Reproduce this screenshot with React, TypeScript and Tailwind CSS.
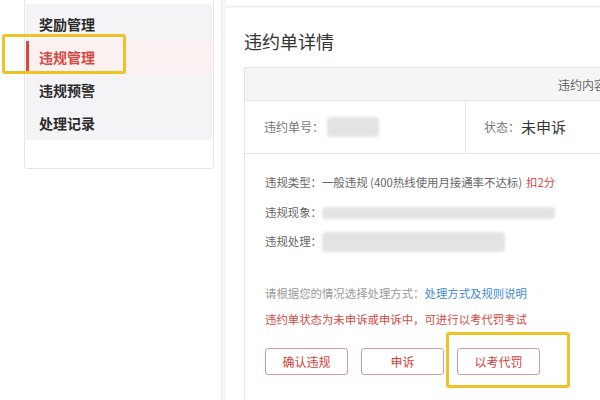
import { ReactNode } from "react";

const menuItems = ["奖励管理", "违规管理", "违规预警", "处理记录"];

function Blur({ className }: { className: string }) {
    // masked-out values in the screenshot
    return <div className={`rounded-[4px] bg-[#e3e3e3] blur-[1.5px] ${className}`} />;
}

function OutlineButton({ children }: { children: ReactNode }) {
    return (
        <button className="w-[83px] h-[27px] rounded-[3px] border border-[#d39a9a] bg-white text-[12px] text-[#d2403c]">
            {children}
        </button>
    );
}

export default function App() {
    return (
        <div
            className="relative w-[600px] h-[400px] overflow-hidden flex bg-white"
            style={{ fontFamily: '"Noto Sans CJK SC", "Noto Sans", sans-serif' }}
        >
            {/* Sidebar */}
            <div className="w-[221px] shrink-0 pl-[24px] pr-[7px]">
                <div className="h-[169px] border-x border-b border-[#e6e6e6] rounded-b-[4px] bg-white pt-[4px] px-[1px]">
                    <div className="bg-[#f4f4f6] h-[136px] flex flex-col pt-[4px]">
                        {menuItems.map((item, i) => (
                            <div
                                key={item}
                                className={
                                    i === 1
                                        ? "h-[34px] flex items-center pl-[10px] border-l-[3px] border-[#d9473f] bg-[#fbf1f1] text-[#d9473f] text-[14px] font-bold"
                                        : "h-[34px] flex items-center pl-[13px] text-[#2b2b2b] text-[14px] font-bold"
                                }
                            >
                                {item}
                            </div>
                        ))}
                    </div>
                </div>
            </div>

            {/* Main area */}
            <div className="flex-1 flex flex-col bg-[#f6f6f6] border-l border-[#ececec] pl-[4px]">
                <div className="h-[7px] bg-white border-b border-[#ececec] shrink-0" />
                <div className="flex-1 bg-white mt-[1px] pl-[18px] pt-[21px]">
                    <h1 className="text-[18px] leading-[24px] text-[#333] font-normal">违约单详情</h1>

                    <div className="mt-[14px] w-[420px] border-l border-t border-[#e6e6e6]">
                        <div className="h-[33px] pt-[2px] bg-[#f5f5f5] border-b border-[#e6e6e6] flex items-center pl-[313px] text-[12px] text-[#666]">
                            违约内容
                        </div>
                        <div className="h-[53px] border-b border-[#e6e6e6] flex">
                            <div className="w-[221px] border-r border-[#e6e6e6] flex items-center pl-[19px] text-[12px] text-[#777]">
                                违约单号：
                                <Blur className="ml-[3px] w-[52px] h-[20px]" />
                            </div>
                            <div className="flex items-center pl-[18px] text-[12px] text-[#777]">
                                状态：<span className="ml-[1px] text-[15px] text-[#333]">未申诉</span>
                            </div>
                        </div>

                        <div className="pl-[20px] pt-[14px] pb-[40px] text-[11.4px] text-[#666]">
                            <div className="h-[30px] flex items-center">
                                违规类型：一般违规 (400热线使用月接通率不达标)
                                <span className="ml-[4px] text-[#d9473f]">扣2分</span>
                            </div>
                            <div className="h-[29px] flex items-center">
                                违规现象：
                                <Blur className="w-[233px] h-[12px]" />
                            </div>
                            <div className="h-[30px] flex items-center">
                                违规处理：
                                <Blur className="w-[183px] h-[20px]" />
                            </div>

                            <div className="mt-[27px] h-[20px] flex items-center text-[#9a9a9a]">
                                请根据您的情况选择处理方式：
                                <span className="text-[#3d8bd1]">处理方式及规则说明</span>
                            </div>
                            <div className="mt-[6px] h-[20px] flex items-center text-[#d9473f]">
                                违约单状态为未申诉或申诉中，可进行以考代罚考试
                            </div>

                            <div className="mt-[18px] flex gap-[13px]">
                                <OutlineButton>确认违规</OutlineButton>
                                <OutlineButton>申诉</OutlineButton>
                                <OutlineButton>以考代罚</OutlineButton>
                            </div>
                        </div>
                    </div>
                </div>
            </div>

            {/* Yellow highlight frames */}
            <div className="absolute left-[2px] top-[34px] w-[124px] h-[40px] border-[3px] border-[#efc226] rounded-[3px]" />
            <div className="absolute left-[446px] top-[332px] w-[124px] h-[56px] border-[3px] border-[#efc226] rounded-[3px]" />
        </div>
    );
}
